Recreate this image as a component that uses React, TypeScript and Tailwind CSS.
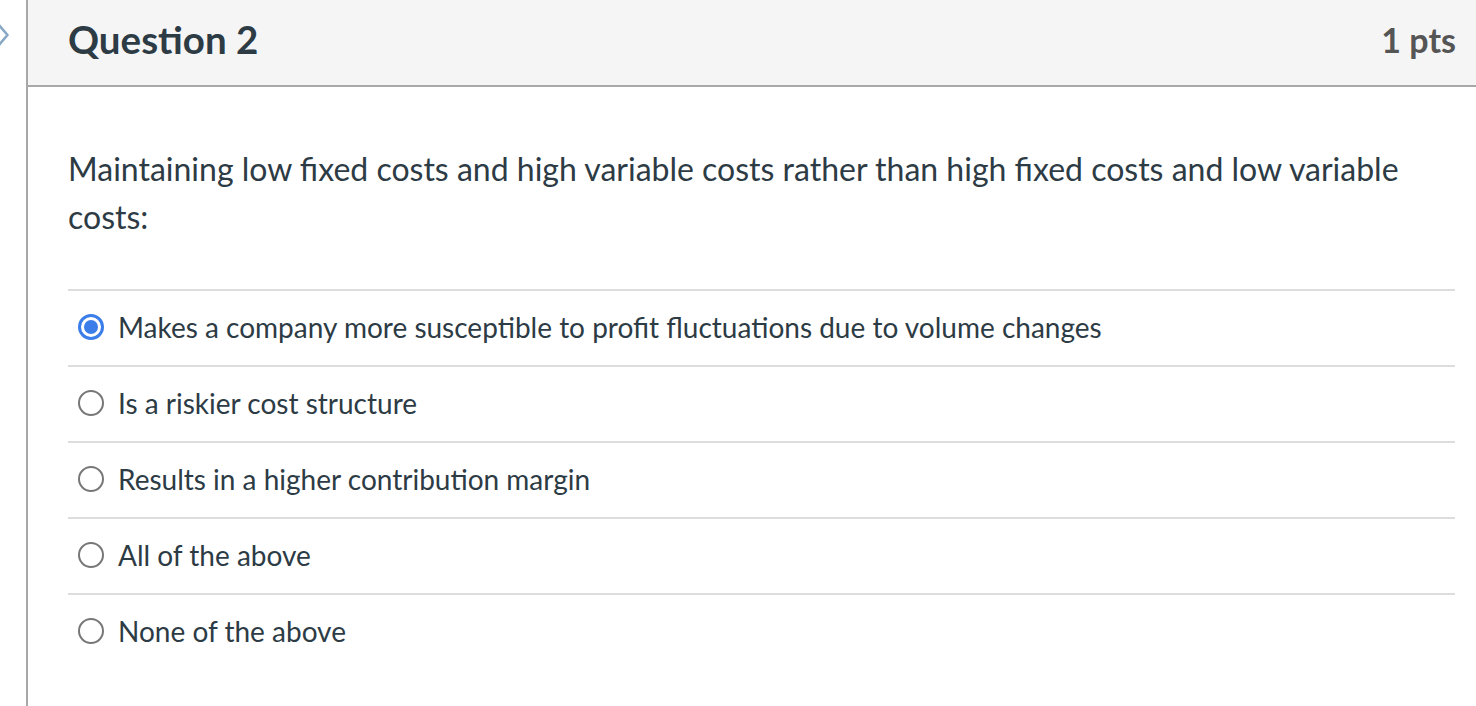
import React from "react";

const ANSWERS = [
  "Makes a company more susceptible to profit fluctuations due to volume changes",
  "Is a riskier cost structure",
  "Results in a higher contribution margin",
  "All of the above",
  "None of the above",
];

function Radio({ checked }: { checked: boolean }) {
  if (checked) {
    return (
      <span className="flex h-[26px] w-[26px] shrink-0 items-center justify-center rounded-full border-[3px] border-[#3b7de9] bg-white">
        <span className="h-[14px] w-[14px] rounded-full bg-[#3b7de9]" />
      </span>
    );
  }
  return <span className="h-[26px] w-[26px] shrink-0 rounded-full border-2 border-[#777777] bg-white" />;
}

export default function App() {
  return (
    <div className="flex h-[706px] w-full overflow-hidden bg-white font-['Lato',sans-serif] text-[#2d3b45]">
      {/* gutter with the nav chevron */}
      <div className="w-[26px] shrink-0 pt-[23px]">
        <svg width="12" height="24" viewBox="0 0 12 24" className="-ml-[2px]">
          <path d="M1 2 L9.5 12 L1 22" fill="none" stroke="#88a8c6" strokeWidth="2.6" strokeLinejoin="round" />
        </svg>
      </div>

      <div className="flex flex-1 flex-col border-l-2 border-[#a8a8a8]">
        <div className="flex h-[87px] shrink-0 items-center justify-between border-b-2 border-[#a8a8a8] bg-[#f5f5f5] pb-[6px] pl-[40px] pr-[20px]">
          <h2 className="text-[38.5px] font-bold leading-none text-[#2d3b45]">Question 2</h2>
          <span className="text-[34px] font-bold leading-none text-[#555555]">1 pts</span>
        </div>

        <div className="pl-[40px] pr-[21px] pt-[58px]">
          <p className="text-[32px] leading-[48px]">
            Maintaining low fixed costs and high variable costs rather than high fixed costs and low variable costs:
          </p>

          <div className="mt-[48px]">
            {ANSWERS.map((a, i) => (
              <div key={i} className="flex h-[76px] items-center gap-[14px] border-t-2 border-[#dddddd] pb-[2px] pl-[10px]">
                <Radio checked={i === 0} />
                <span className="text-[28px] leading-none">{a}</span>
              </div>
            ))}
          </div>
        </div>
      </div>
    </div>
  );
}
